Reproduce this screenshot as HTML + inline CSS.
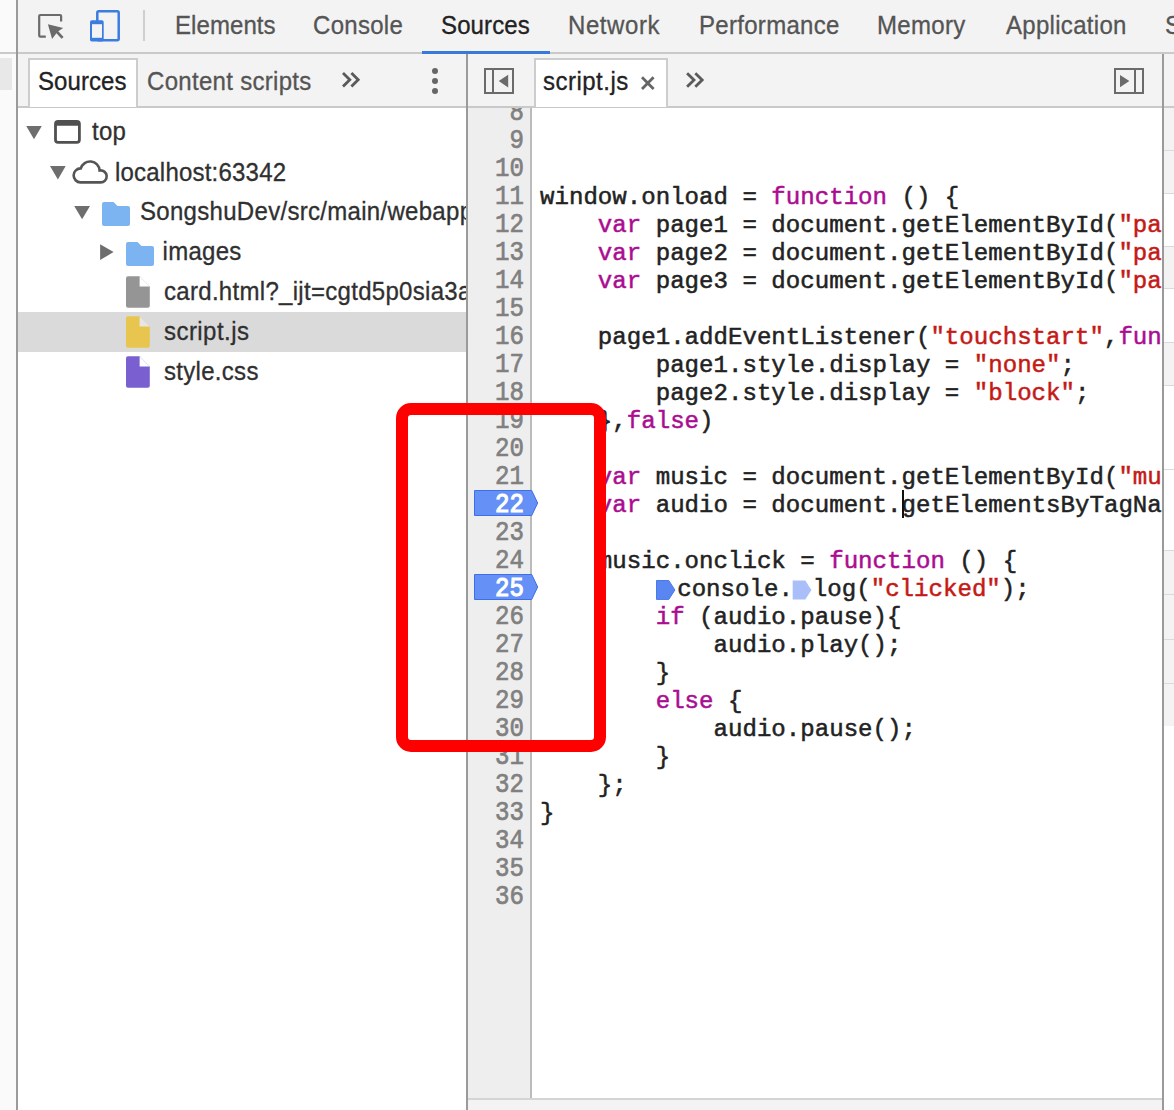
<!DOCTYPE html>
<html><head><meta charset="utf-8">
<style>
*{box-sizing:border-box;margin:0;padding:0}
html,body{width:1174px;height:1110px;overflow:hidden;background:#fff}
body{position:relative;font-family:"Liberation Sans",sans-serif;color:#333}
.a{position:absolute}
.t{position:absolute;white-space:pre;font-size:24px;line-height:24px;letter-spacing:0.3px;transform:scaleY(1.07);transform-origin:0 20.3px;-webkit-text-stroke:0.3px currentColor}
.clip{position:absolute;overflow:hidden}
.code{position:absolute;font-family:"Liberation Mono",monospace;font-size:24.1px;line-height:28px;white-space:pre;color:#222}
.code .k{color:#aa0d91}
.code .s{color:#c41a16}
.ln{position:absolute;font-family:"Liberation Mono",monospace;font-size:24.1px;line-height:28px;white-space:pre;color:#808080;text-align:right}
.m1,.m2{display:inline-block;width:21px;height:19px;vertical-align:-2px;position:relative}
.L{height:28px;-webkit-text-stroke:0.5px currentColor;transform:scaleY(1.03);transform-origin:0 20.4px}
.ln .L,.lw{transform:scaleY(1.12);-webkit-text-stroke:0.6px currentColor}
.m1{width:21.5px}.m2{width:20px}
.cur{display:inline-block;width:0;height:0}
svg{position:absolute;left:0;top:0}
</style></head><body>
<!-- left strip -->
<div class="a" style="left:0;top:0;width:16px;height:1110px;background:#fafafa"></div>
<div class="a" style="left:0;top:52px;width:16px;height:2px;background:#c9c9c9"></div>
<div class="a" style="left:0;top:58px;width:12px;height:32px;background:#e8e8e8"></div>
<div class="a" style="left:16px;top:0;width:2px;height:1110px;background:#9a9a9a"></div>

<!-- top toolbar -->
<div class="a" style="left:18px;top:0;width:1156px;height:52px;background:#f3f3f3"></div>
<div class="a" style="left:18px;top:52px;width:1156px;height:2px;background:#c9c9c9"></div>
<div class="a" style="left:143px;top:10px;width:2px;height:31px;background:#cfcfcf"></div>
<div class="t" style="left:175px;top:14px;color:#555;letter-spacing:0.08px">Elements</div>
<div class="t" style="left:313px;top:14px;color:#555">Console</div>
<div class="t" style="left:441px;top:14px;color:#222;letter-spacing:0.12px">Sources</div>
<div class="t" style="left:568px;top:14px;color:#555;letter-spacing:0.58px">Network</div>
<div class="t" style="left:699px;top:14px;color:#555">Performance</div>
<div class="t" style="left:877px;top:14px;color:#555">Memory</div>
<div class="t" style="left:1006px;top:14px;color:#555">Application</div>
<div class="t" style="left:1165px;top:14px;color:#555">Security</div>
<div class="a" style="left:422px;top:51px;width:128px;height:3px;background:#3879d9"></div>

<!-- second toolbar -->
<div class="a" style="left:18px;top:54px;width:1156px;height:52px;background:#f3f3f3"></div>
<div class="a" style="left:18px;top:106px;width:1156px;height:2px;background:#c9c9c9"></div>
<div class="a" style="left:28px;top:58px;width:110px;height:49px;background:#fff;border:2px solid #cdcdcd;border-bottom:none"></div>
<div class="t" style="left:38px;top:70px;color:#222;letter-spacing:0.08px">Sources</div>
<div class="t" style="left:147px;top:70px;color:#555">Content scripts</div>

<!-- dividers -->
<div class="a" style="left:466px;top:54px;width:2px;height:1056px;background:#9a9a9a"></div>
<div class="a" style="left:1162px;top:54px;width:2px;height:1056px;background:#9a9a9a"></div>

<!-- right sidebar sliver -->
<div class="a" style="left:1164px;top:108px;width:10px;height:42px;background:#f3f3f3"></div>
<div class="a" style="left:1164px;top:151px;width:10px;height:42px;background:#f3f3f3"></div>
<div class="a" style="left:1164px;top:194px;width:10px;height:52px;background:#fff"></div>
<div class="a" style="left:1164px;top:247px;width:10px;height:41px;background:#f3f3f3"></div>
<div class="a" style="left:1164px;top:289px;width:10px;height:53px;background:#fff"></div>
<div class="a" style="left:1164px;top:343px;width:10px;height:42px;background:#f3f3f3"></div>
<div class="a" style="left:1164px;top:386px;width:10px;height:83px;background:#fff"></div>
<div class="a" style="left:1164px;top:470px;width:10px;height:80px;background:#fff"></div>
<div class="a" style="left:1164px;top:551px;width:10px;height:43px;background:#f3f3f3"></div>
<div class="a" style="left:1164px;top:595px;width:10px;height:44px;background:#f3f3f3"></div>
<div class="a" style="left:1164px;top:640px;width:10px;height:43px;background:#f3f3f3"></div>
<div class="a" style="left:1164px;top:684px;width:10px;height:42px;background:#f3f3f3"></div>
<div class="a" style="left:1164px;top:726px;width:10px;height:384px;background:#fff"></div>
<div class="a" style="left:1164px;top:150px;width:10px;height:1px;background:#dadada"></div>
<div class="a" style="left:1164px;top:193px;width:10px;height:1px;background:#dadada"></div>
<div class="a" style="left:1164px;top:246px;width:10px;height:1px;background:#dadada"></div>
<div class="a" style="left:1164px;top:288px;width:10px;height:1px;background:#dadada"></div>
<div class="a" style="left:1164px;top:342px;width:10px;height:1px;background:#dadada"></div>
<div class="a" style="left:1164px;top:385px;width:10px;height:1px;background:#dadada"></div>
<div class="a" style="left:1164px;top:469px;width:10px;height:1px;background:#dadada"></div>
<div class="a" style="left:1164px;top:550px;width:10px;height:1px;background:#dadada"></div>
<div class="a" style="left:1164px;top:594px;width:10px;height:1px;background:#dadada"></div>
<div class="a" style="left:1164px;top:639px;width:10px;height:1px;background:#dadada"></div>
<div class="a" style="left:1164px;top:683px;width:10px;height:1px;background:#dadada"></div>


<!-- editor tab -->
<div class="a" style="left:534px;top:58px;width:134px;height:49px;background:#fff;border:2px solid #cdcdcd;border-bottom:none"></div>
<div class="t" style="left:543px;top:70px;color:#222;letter-spacing:0.49px">script.js</div>

<!-- tree -->
<div class="a" style="left:18px;top:312px;width:448px;height:40px;background:#dadada"></div>
<div class="t" style="left:92px;top:120px;color:#303030">top</div>
<div class="t" style="left:115px;top:161px;color:#303030;letter-spacing:0.21px">localhost:63342</div>
<div class="clip" style="left:18px;top:190px;width:448px;height:40px"><div class="t" style="left:122px;top:10px;color:#303030">SongshuDev/src/main/webapp</div></div>
<div class="t" style="left:162.5px;top:240px;color:#303030">images</div>
<div class="clip" style="left:18px;top:270px;width:448px;height:40px"><div class="t" style="left:146px;top:10px;color:#303030">card.html?_ijt=cgtd5p0sia3a2dm</div></div>
<div class="t" style="left:164px;top:320px;color:#303030;letter-spacing:0.45px">script.js</div>
<div class="t" style="left:164px;top:360px;color:#303030">style.css</div>

<!-- gutter -->
<div class="a" style="left:468px;top:108px;width:62px;height:990px;background:#eee"></div>
<div class="a" style="left:530px;top:108px;width:2px;height:990px;background:#bbb"></div>

<!-- code -->
<div class="clip" style="left:468px;top:108px;width:694px;height:990px">
 <div class="ln" style="left:0;top:-8px;width:56px"><div class="L">8</div><div class="L">9</div><div class="L">10</div><div class="L">11</div><div class="L">12</div><div class="L">13</div><div class="L">14</div><div class="L">15</div><div class="L">16</div><div class="L">17</div><div class="L">18</div><div class="L">19</div><div class="L">20</div><div class="L">21</div><div class="L">22</div><div class="L">23</div><div class="L">24</div><div class="L">25</div><div class="L">26</div><div class="L">27</div><div class="L">28</div><div class="L">29</div><div class="L">30</div><div class="L">31</div><div class="L">32</div><div class="L">33</div><div class="L">34</div><div class="L">35</div><div class="L">36</div></div>
 <div class="code" style="left:72px;top:-8px"><div class="L"> </div><div class="L"> </div><div class="L"> </div><div class="L">window.onload = <span class="k">function</span> () {</div><div class="L">    <span class="k">var</span> page1 = document.getElementById(<span class="s">"pa</span></div><div class="L">    <span class="k">var</span> page2 = document.getElementById(<span class="s">"pa</span></div><div class="L">    <span class="k">var</span> page3 = document.getElementById(<span class="s">"pa</span></div><div class="L"> </div><div class="L">    page1.addEventListener(<span class="s">"touchstart"</span>,<span class="k">fun</span></div><div class="L">        page1.style.display = <span class="s">"none"</span>;</div><div class="L">        page2.style.display = <span class="s">"block"</span>;</div><div class="L">    },<span class="k">false</span>)</div><div class="L"> </div><div class="L">    <span class="k">var</span> music = document.getElementById(<span class="s">"mu</span></div><div class="L">    <span class="k">var</span> audio = document.<span class="cur"></span>getElementsByTagNa</div><div class="L"> </div><div class="L">    music.onclick = <span class="k">function</span> () {</div><div class="L">        <span class="m1"></span>console.<span class="m2"></span>log(<span class="s">"clicked"</span>);</div><div class="L">        <span class="k">if</span> (audio.pause){</div><div class="L">            audio.play();</div><div class="L">        }</div><div class="L">        <span class="k">else</span> {</div><div class="L">            audio.pause();</div><div class="L">        }</div><div class="L">    };</div><div class="L">}</div><div class="L"> </div><div class="L"> </div><div class="L"> </div></div>
</div>

<svg width="1174" height="1110" viewBox="0 0 1174 1110">
 <!-- inspect icon -->
 <path d="M45.8 36.7 H40.3 Q39.2 36.7 39.2 35.6 V16.1 Q39.2 15 40.3 15 H60 Q61.1 15 61.1 16.1 V21.6" fill="none" stroke="#6b6b6b" stroke-width="2.2"/>
 <path d="M47.9 24.2 L63.2 28 L58.3 31.3 L63.6 36.9 L61.6 38.8 L56.4 33.2 L52.1 39 Z" fill="#6b6b6b"/>
 <!-- device icon -->
 <rect x="97.3" y="11.3" width="21.4" height="29" rx="1.5" fill="none" stroke="#3a7ce0" stroke-width="2.5"/>
 <rect x="90" y="20.2" width="13.7" height="21.4" rx="1.8" fill="#3a7ce0"/>
 <rect x="92" y="24.2" width="10" height="13.6" fill="#f3f3f3"/>
 <!-- chevrons left panel -->
 <path d="M343 73.1 L349.8 79.8 L343 86.6 M351.4 73.1 L358.2 79.8 L351.4 86.6" fill="none" stroke="#5a5a5a" stroke-width="2.8"/>
 <!-- dots -->
 <circle cx="435" cy="71" r="3" fill="#666"/><circle cx="435" cy="81" r="3" fill="#666"/><circle cx="435" cy="91" r="3" fill="#666"/>
 <!-- navigator toggle -->
 <rect x="485" y="69" width="28" height="24" fill="none" stroke="#6b6b6b" stroke-width="2"/>
 <rect x="492" y="69" width="2" height="24" fill="#6b6b6b"/>
 <path d="M498.7 81.1 L508.2 74.8 V87.4 Z" fill="#6b6b6b"/>
 <!-- debugger toggle -->
 <rect x="1115" y="69" width="28" height="24" fill="none" stroke="#6b6b6b" stroke-width="2"/>
 <rect x="1134" y="69" width="2" height="24" fill="#6b6b6b"/>
 <path d="M1129.4 81.1 L1120 75 V87.2 Z" fill="#6b6b6b"/>
 <!-- close x -->
 <path d="M642 77.3 L653.6 88.9 M653.6 77.3 L642 88.9" fill="none" stroke="#666" stroke-width="2.8"/>
 <!-- chevrons editor -->
 <path d="M687.1 73.2 L694 79.9 L687.1 86.7 M695.3 73.2 L702.2 79.9 L695.3 86.7" fill="none" stroke="#5a5a5a" stroke-width="2.8"/>
 <!-- tree triangles -->
 <path d="M26.2 126 H41.8 L34 139.3 Z" fill="#6e6e6e"/>
 <path d="M50 166 H65.7 L57.9 179.5 Z" fill="#6e6e6e"/>
 <path d="M74.2 206 H90 L82.1 219.3 Z" fill="#6e6e6e"/>
 <path d="M100.1 244.2 L113.6 252.1 L100.1 260 Z" fill="#6e6e6e"/>
 <!-- window icon -->
 <rect x="55.5" y="121.5" width="23.9" height="20.9" rx="2.6" fill="none" stroke="#505050" stroke-width="2.8"/>
 <rect x="55" y="121" width="25" height="4.8" rx="1" fill="#505050"/>
 <!-- cloud -->
 <path d="M80.5 182.4 H100.5 A6 6 0 1 0 99.6 170.5 A9.6 9.6 0 0 0 80.8 168.4 A7 7 0 1 0 80.5 182.4 Z" fill="none" stroke="#555" stroke-width="2.6"/>
 <!-- folders -->
 <path d="M104 202 H113.5 L117.5 206 H128 Q130 206 130 208 V224 Q130 226 128 226 H104 Q102 226 102 224 V204 Q102 202 104 202 Z" fill="#7cb4f2"/>
 <path d="M128 242 H137.5 L141.5 246 H152 Q154 246 154 248 V264 Q154 266 152 266 H128 Q126 266 126 264 V244 Q126 242 128 242 Z" fill="#7cb4f2"/>
 <!-- files -->
 <path d="M128 276.2 H139.6 L149.8 286.4 V305.7 Q149.8 307.7 147.8 307.7 H128 Q126 307.7 126 305.7 V278.2 Q126 276.2 128 276.2 Z" fill="#959595"/>
 <path d="M139.6 276.2 L149.8 286.4 H139.6 Z" fill="#fff"/>
 <path d="M128 316.2 H139.6 L149.8 326.4 V345.7 Q149.8 347.7 147.8 347.7 H128 Q126 347.7 126 345.7 V318.2 Q126 316.2 128 316.2 Z" fill="#e8c54f"/>
 <path d="M139.6 316.2 L149.8 326.4 H139.6 Z" fill="#e6e6e6"/>
 <path d="M128 356.2 H139.6 L149.8 366.4 V385.7 Q149.8 387.7 147.8 387.7 H128 Q126 387.7 126 385.7 V358.2 Q126 356.2 128 356.2 Z" fill="#7a5fd0"/>
 <path d="M139.6 356.2 L149.8 366.4 H139.6 Z" fill="#fff"/>
 <!-- breakpoint markers -->
 <path d="M474.5 490.5 H531.7 L537.7 503 L531.7 515.5 H474.5 Z" fill="#6590f6" stroke="#3f6fe6" stroke-width="1"/>
 <path d="M474.5 574.5 H531.7 L537.7 587 L531.7 599.5 H474.5 Z" fill="#6590f6" stroke="#3f6fe6" stroke-width="1"/>
 <!-- inline markers -->
 <path d="M656.5 580.5 H668.8 L674.9 590 L668.8 599.4 H656.5 Z" fill="#5a86f2" stroke="#4b78ea" stroke-width="1"/>
 <path d="M792.7 580.5 H805.3 L811.4 590 L805.3 599.4 H792.7 Z" fill="#aabffa"/>
</svg>

<div class="ln" style="left:468px;top:492px;width:56px;color:#fff"><div class="L lw" style="-webkit-text-stroke:1px #fff">22</div></div>
<div class="ln" style="left:468px;top:576px;width:56px;color:#fff"><div class="L lw" style="-webkit-text-stroke:1px #fff">25</div></div>
<div class="a" style="left:902px;top:490px;width:2px;height:28px;background:#111"></div>
<!-- bottom bar -->
<div class="a" style="left:468px;top:1098px;width:694px;height:2px;background:#d4d4d4"></div>
<div class="a" style="left:468px;top:1100px;width:694px;height:10px;background:#f3f3f3"></div>

<!-- red box -->
<div class="a" style="left:396px;top:403px;width:210px;height:349px;border:12px solid #fe0000;border-radius:15px"></div>
</body></html>
